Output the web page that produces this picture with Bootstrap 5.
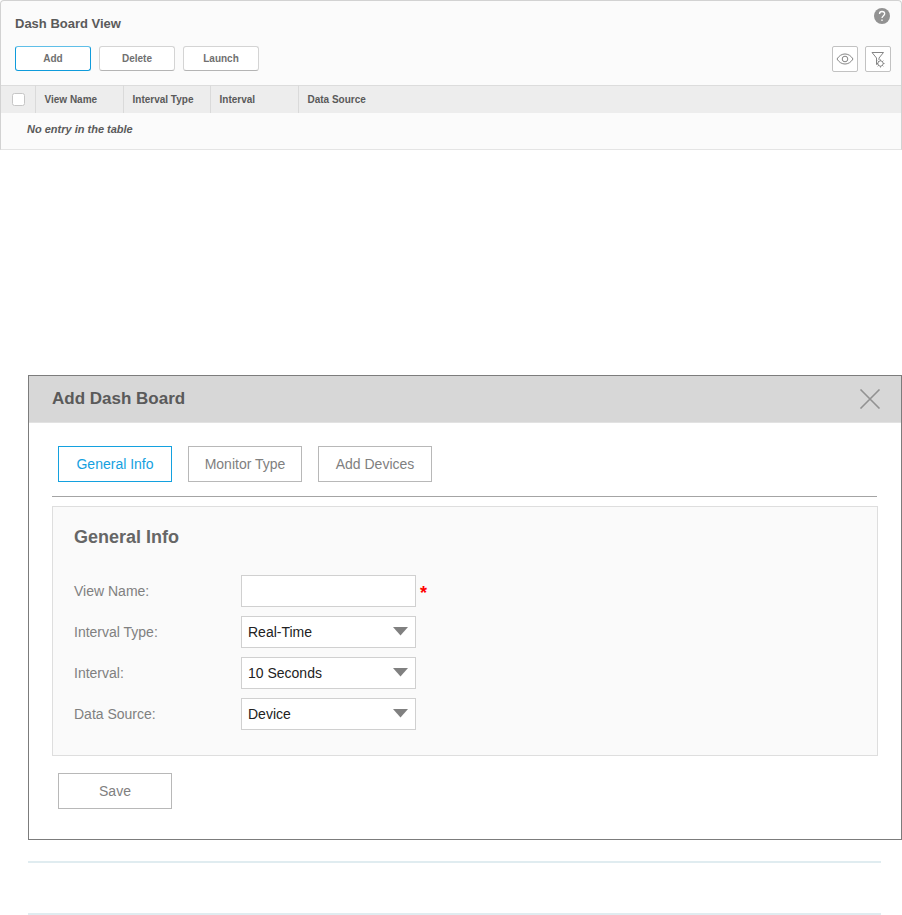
<!DOCTYPE html>
<html lang="en">
<head>
<meta charset="utf-8">
<meta name="viewport" content="width=device-width, initial-scale=1">
<title>Dash Board View</title>
<link rel="stylesheet" href="https://cdn.jsdelivr.net/npm/bootstrap@5.3.0/dist/css/bootstrap.min.css">
<style>
body { font-family: "Liberation Sans", Arial, sans-serif; color: #5a5a5a; background: #fff; }
.view-panel { background: #fbfbfb; border: 1px solid #d2d2d2; border-bottom-color: #e4e4e4; border-radius: 4px 4px 0 0; margin-bottom: 225px; }
.view-head { padding: 7px 11px 0 14px; }
.view-title { font-size: 13px; line-height: 16px; padding-top: 8px; }
.view-tools { padding: 14px 10px 13px 14px; }
.icon-tools { gap: 7px; }
.tool-btn { --bs-btn-border-radius: 3px; width: 76px; height: 25px; font-size: 10px; font-weight: 700; line-height: 12px; color: #707070; background: #fff; border-color: #d4d4d4; border-bottom-color: #b4b4b4; }
.tool-btn.chosen { border-color: #0f9bdb; border-top-color: #5fbfe8; }
.square-btn { width: 26px; height: 26px; border-radius: 2px; border-color: #c2c2c2; background: #fff; }
.help-btn svg, .square-btn svg, .close-btn svg { display: block; }
.view-table { table-layout: fixed; font-size: 10px; line-height: 14px; }
.view-table thead { background: #ededed; border-top: 1px solid #dcdcdc; }
.view-table th { height: 27px; padding: 1px 9px 0; border-right: 1px solid #dadada; white-space: nowrap; }
.view-table th:last-child { border-right: 0; }
.view-table td { height: 36px; padding: 0 26px 3px; font-size: 11px; font-weight: 700; font-style: italic; }
.c-tick { width: 34px; } .c-wide { width: 88px; } .c-type { width: 87px; }
.tick { width: 13px; height: 13px; border: 1px solid #c6c6c6; border-radius: 2px; margin: 0 0 0 2px; display: block; }
.tick:not(:checked) { background: #fff; }
.board-dialog { border: 1px solid #7c7c7c; background: #fff; margin: 0 0 21px 28px; padding-bottom: 30px; }
.board-head { background: #d7d7d7; border-bottom: 1px solid #e2e2e2; height: 47px; padding: 0 20px 0 23px; }
.board-title { font-size: 17px; line-height: 22px; }
.board-body { padding: 23px 23px 0; }
.step-row { gap: 16px; padding: 0 6px 14px; margin-right: 1px; border-bottom: 1px solid #a4a4a4; }
.box-btn { --bs-btn-border-radius: 0; width: 114px; height: 36px; font-size: 14px; line-height: 18px; color: #808080; background: #fff; border-color: #b8b8b8; white-space: nowrap; }
.box-btn.chosen { color: #14a1df; border-color: #14a1df; }
.info-box { background: #fafafa; border: 1px solid #dedede; margin: 9px 0 17px; padding: 19px 21px 25px; }
.info-title { font-size: 18px; line-height: 22px; color: #666; margin-bottom: 27px; }
.field-list { gap: 9px; }
.field-label { width: 167px; font-size: 14px; line-height: 18px; color: #808080; }
.field-box { width: 175px; height: 32px; border-radius: 0; border: 1px solid #d0d0d0; padding: 1px 6px 0 6px; font-size: 14px; color: #222; background-color: #fff; }
select.field-box { background-image: url("data:image/svg+xml,%3Csvg xmlns='http://www.w3.org/2000/svg' viewBox='0 0 15 9'%3E%3Cpath d='M0 0h15L7.500 8.500z' fill='%23808080'/%3E%3C/svg%3E"); background-size: 15px 9px; background-position: right 7px center; }
.required-star { font-size: 18px; line-height: 18px; font-weight: 700; color: #f00; padding: 5px 0 0 4px; }
.save-row { padding-left: 6px; }
.rule-line { border-top: 2px solid #e0ecf0; margin: 0 21px 50px 28px; }
.rule-line:last-child { margin-bottom: 0; }
</style>
<script src="https://cdn.jsdelivr.net/npm/bootstrap@5.3.0/dist/js/bootstrap.bundle.min.js"></script>
</head>
<body>
<section class="view-panel">
  <div class="view-head d-flex justify-content-between align-items-start">
    <h1 class="view-title fw-bold m-0">Dash Board View</h1>
    <button type="button" class="help-btn btn p-0 border-0" aria-label="Help">
      <svg width="16" height="16" viewBox="0 0 16 16" fill="none"><circle cx="8" cy="8" r="8" fill="#929292"/><path d="M5.500 6C5.500 4 6.500 3.500 8 3.500S10.700 4.300 10.700 5.800C10.700 7.600 8 7.800 8 10M8 11.500V13" stroke="#fff" stroke-width="1.300"/></svg>
    </button>
  </div>
  <div class="view-tools d-flex justify-content-between">
    <div class="d-flex gap-2">
      <button type="button" class="tool-btn chosen btn p-0">Add</button>
      <button type="button" class="tool-btn btn p-0">Delete</button>
      <button type="button" class="tool-btn btn p-0">Launch</button>
    </div>
    <div class="icon-tools d-flex">
      <button type="button" class="square-btn btn p-0 d-flex align-items-center justify-content-center" aria-label="Columns">
        <svg width="18" height="14" viewBox="0 0 18 14" fill="none" stroke="#858585"><path d="M1 7C5 0.300 13 0.300 17 7C13 13.700 5 13.700 1 7Z"/><circle cx="9" cy="7" r="2.800"/></svg>
      </button>
      <button type="button" class="square-btn btn p-0 d-flex align-items-center justify-content-center" aria-label="Filter">
        <svg width="16" height="18" viewBox="0 0 16 18" fill="none" stroke="#858585"><path d="M2 2.500H13.500L9 8V10M2 2.500L6.500 8V14.500L8 13.500"/><circle cx="10.500" cy="13.500" r="2.700"/><path d="M10.500 9.500V10.800M10.500 16.200V17.500M6.500 13.500H7.800M13.200 13.500H14.500M7.700 10.700L8.600 11.600M12.400 15.400L13.300 16.300M13.300 10.700L12.400 11.600M8.600 15.400L7.700 16.300"/></svg>
      </button>
    </div>
  </div>
  <table class="view-table w-100">
    <thead>
      <tr>
        <th class="c-tick" scope="col"><input type="checkbox" class="tick form-check-input" aria-label="Select all views"></th>
        <th class="c-wide" scope="col">View Name</th>
        <th class="c-type" scope="col">Interval Type</th>
        <th class="c-wide" scope="col">Interval</th>
        <th scope="col">Data Source</th>
      </tr>
    </thead>
    <tbody><tr><td colspan="5">No entry in the table</td></tr></tbody>
  </table>
</section>

<section class="board-dialog" role="dialog" aria-labelledby="boardTitle">
  <header class="board-head d-flex justify-content-between align-items-center">
    <h2 class="board-title fw-bold m-0" id="boardTitle">Add Dash Board</h2>
    <button type="button" class="close-btn btn p-0 border-0" aria-label="Close">
      <svg width="22" height="20" viewBox="0 0 22 20" fill="none" stroke="#929292" stroke-width="1.600"><path d="M1.500 0.500L20.500 19.500M20.500 0.500L1.500 19.500"/></svg>
    </button>
  </header>
  <div class="board-body">
    <div class="step-row d-flex">
      <button type="button" class="box-btn chosen btn p-0">General Info</button>
      <button type="button" class="box-btn btn p-0">Monitor Type</button>
      <button type="button" class="box-btn btn p-0">Add Devices</button>
    </div>
    <form>
      <div class="info-box">
        <h3 class="info-title fw-bold">General Info</h3>
        <div class="field-list d-flex flex-column">
          <div class="d-flex align-items-center">
            <label class="field-label" for="viewName">View Name:</label>
            <input type="text" class="field-box form-control" id="viewName" required>
            <span class="required-star">*</span>
          </div>
          <div class="d-flex align-items-center">
            <label class="field-label" for="intervalType">Interval Type:</label>
            <select class="field-box form-select" id="intervalType"><option>Real-Time</option></select>
          </div>
          <div class="d-flex align-items-center">
            <label class="field-label" for="interval">Interval:</label>
            <select class="field-box form-select" id="interval"><option>10 Seconds</option></select>
          </div>
          <div class="d-flex align-items-center">
            <label class="field-label" for="dataSource">Data Source:</label>
            <select class="field-box form-select" id="dataSource"><option>Device</option></select>
          </div>
        </div>
      </div>
      <div class="save-row"><button type="submit" class="box-btn btn p-0">Save</button></div>
    </form>
  </div>
</section>
<div class="rule-line"></div>
<div class="rule-line"></div>
</body>
</html>
